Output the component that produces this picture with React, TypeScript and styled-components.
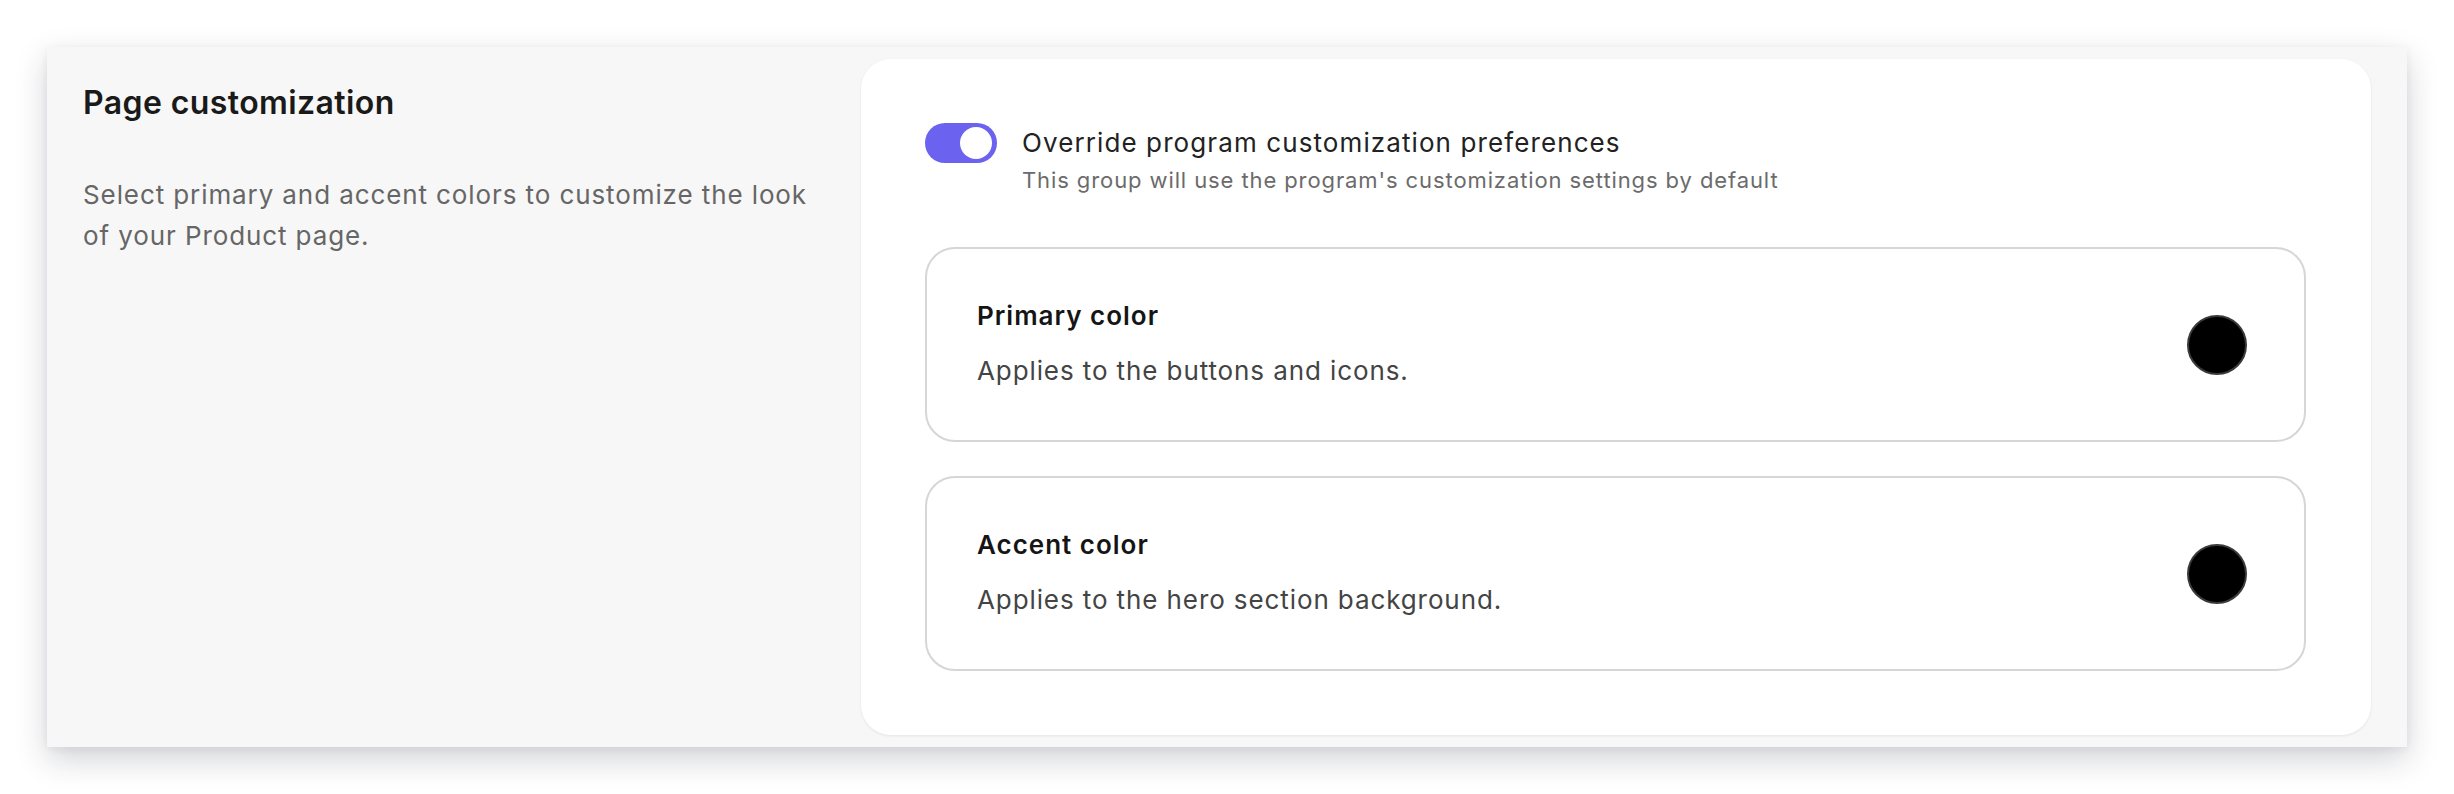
import React, { useState } from "react"
import styled, { createGlobalStyle } from "styled-components"

const GlobalStyle = createGlobalStyle`
  html, body {
    margin: 0;
    padding: 0;
    background: #ffffff;
  }
  body {
    padding: 47px;
    font-family: Inter, "Noto Sans", "Liberation Sans", sans-serif;
    letter-spacing: 0.9px;
    -webkit-font-smoothing: antialiased;
  }
`

type ColorSetting = {
  title: string
  description: string
  color: string
}

const settings: ColorSetting[] = [
  { title: "Primary color", description: "Applies to the buttons and icons.", color: "#000000" },
  { title: "Accent color", description: "Applies to the hero section background.", color: "#000000" },
]

export default function App() {
  const [override, setOverride] = useState(true)

  return (
    <>
      <GlobalStyle />
      <Panel>
        <Intro>
          <Heading>Page customization</Heading>
          <Lead>Select primary and accent colors to customize the look of your Product page.</Lead>
        </Intro>
        <Card>
          <ToggleRow>
            <Toggle type="button" $on={override} onClick={() => setOverride(v => !v)} aria-pressed={override}>
              <Knob $on={override} />
            </Toggle>
            <ToggleText>
              <ToggleTitle>Override program customization preferences</ToggleTitle>
              <ToggleHint>This group will use the program's customization settings by default</ToggleHint>
            </ToggleText>
          </ToggleRow>
          <SettingList>
            {settings.map(s => (
              <SettingItem key={s.title}>
                <SettingText>
                  <SettingTitle>{s.title}</SettingTitle>
                  <SettingDescription>{s.description}</SettingDescription>
                </SettingText>
                <Swatch $color={s.color} />
              </SettingItem>
            ))}
          </SettingList>
        </Card>
      </Panel>
    </>
  )
}

const Panel = styled.section`
  display: flex;
  box-sizing: border-box;
  width: 2360px;
  height: 700px;
  padding: 12px 36px 12px 36px;
  background: #f7f7f7;
  box-shadow: 0 12px 30px rgba(30, 35, 50, 0.2), 0 2px 8px rgba(30, 35, 50, 0.06);
`

const Intro = styled.div`
  display: flex;
  flex-direction: column;
  gap: 51px;
  flex: 0 0 778px;
  box-sizing: border-box;
  padding: 24px 36px 0 0;
`

const Heading = styled.h2`
  margin: 0;
  font-size: 32px;
  line-height: 40px;
  font-weight: 600;
  letter-spacing: 0.4px;
  color: #1a1a1a;
`

const Lead = styled.p`
  margin: 0;
  font-size: 26px;
  line-height: 41px;
  color: #666666;
`

const Card = styled.div`
  display: flex;
  flex-direction: column;
  gap: 51px;
  flex: 1;
  box-sizing: border-box;
  padding: 64px 65px 65px 64px;
  background: #ffffff;
  border-radius: 30px;
  box-shadow: 0 1px 3px rgba(0, 0, 0, 0.08);
`

const ToggleRow = styled.div`
  display: flex;
  align-items: flex-start;
  gap: 25px;
`

const Toggle = styled.button<{ $on: boolean }>`
  position: relative;
  flex: 0 0 72px;
  width: 72px;
  height: 40px;
  padding: 0;
  border: none;
  border-radius: 20px;
  background: ${p => (p.$on ? "#6b63f0" : "#d4d4d8")};
  cursor: pointer;
`

const Knob = styled.span<{ $on: boolean }>`
  position: absolute;
  top: 4px;
  left: ${p => (p.$on ? "35px" : "4px")};
  width: 32px;
  height: 32px;
  border-radius: 50%;
  background: #ffffff;
`

const ToggleText = styled.div`
  display: flex;
  flex-direction: column;
  gap: 2px;
`

const ToggleTitle = styled.span`
  font-size: 26px;
  line-height: 39px;
  letter-spacing: 1.1px;
  color: #222222;
`

const ToggleHint = styled.span`
  font-size: 22px;
  line-height: 32px;
  color: #6b6b6b;
`

const SettingList = styled.div`
  display: flex;
  flex-direction: column;
  gap: 34px;
`

const SettingItem = styled.div`
  display: flex;
  align-items: center;
  justify-content: space-between;
  box-sizing: border-box;
  height: 195px;
  padding: 0 57px 0 50px;
  border: 2px solid #d6d6d6;
  border-radius: 30px;
`

const SettingText = styled.div`
  display: flex;
  flex-direction: column;
  gap: 21px;
`

const SettingTitle = styled.span`
  font-size: 26px;
  line-height: 32px;
  font-weight: 600;
  letter-spacing: 1px;
  color: #151515;
`

const SettingDescription = styled.span`
  font-size: 26px;
  line-height: 36px;
  color: #444444;
`

const Swatch = styled.span<{ $color: string }>`
  flex: 0 0 60px;
  width: 60px;
  height: 60px;
  box-sizing: border-box;
  border-radius: 50%;
  background: ${p => p.$color};
  border: 2px solid #3a3a3a;
`
